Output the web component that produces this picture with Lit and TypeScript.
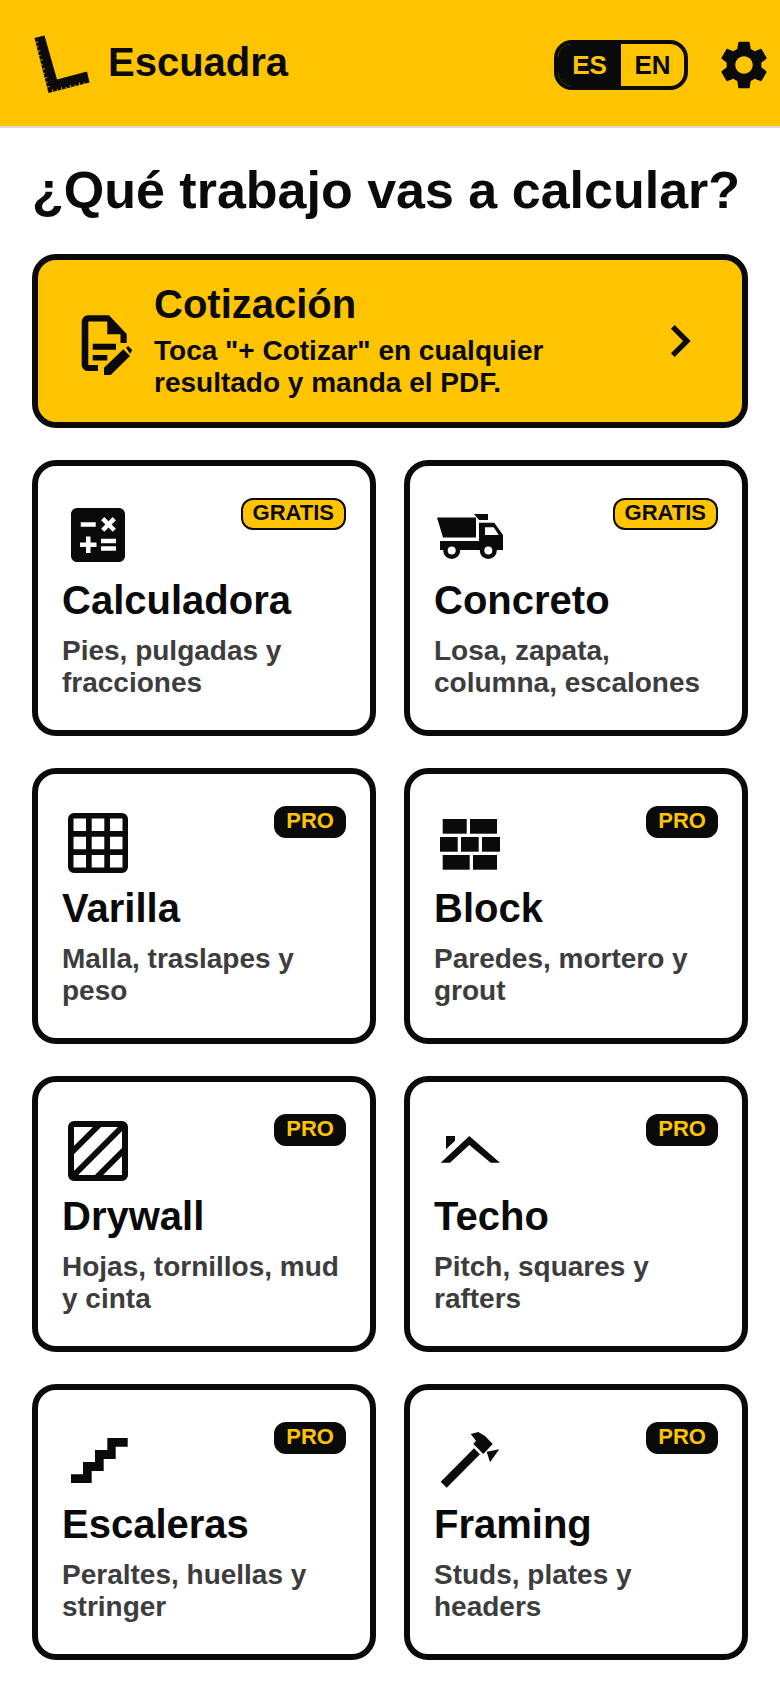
import { LitElement, html, css, svg } from "lit";
import { customElement } from "lit/decorators.js";

const icons: Record<string, unknown> = {
  calc: svg`<svg viewBox="0 0 24 24" width="72" height="72"><path d="M19,3H5C3.9,3,3,3.9,3,5v14c0,1.1,0.9,2,2,2h14c1.1,0,2-0.9,2-2V5C21,3.9,20.1,3,19,3z M13.03,7.06L14.09,6l1.41,1.41L16.91,6l1.06,1.06l-1.41,1.41l1.41,1.41l-1.06,1.06L15.5,9.54l-1.41,1.41l-1.06-1.06l1.41-1.41L13.03,7.06z M6.25,7.72h5v1.5h-5V7.72z M11.5,16h-2v2H8v-2H6v-1.5h2v-2h1.5v2h2V16z M18,17.25h-5v-1.5h5V17.25z M18,14.75h-5v-1.5h5V14.75z"/></svg>`,
  truck: svg`<svg viewBox="0 0 72 72" width="72" height="72"><path d="M3 18.500H42V38.500H9z"/><path d="M40 15H54V21H45z"/><path d="M45 23.700H60.300L69 36V51H6V42H45z"/><path fill="#fff" d="M51 28.300H59.700L64.700 36H51z"/><circle cx="17.700" cy="51.500" r="8.500"/><circle cx="17.700" cy="51.500" r="4" fill="#fff"/><circle cx="54.300" cy="51.500" r="8.500"/><circle cx="54.300" cy="51.500" r="4" fill="#fff"/></svg>`,
  grid: svg`<svg viewBox="0 0 72 72" width="72" height="72"><path fill-rule="evenodd" d="M12 6H60A6 6 0 0 1 66 12V60A6 6 0 0 1 60 66H12A6 6 0 0 1 6 60V12A6 6 0 0 1 12 6zM11.500 11.500V24H24V11.500zM29.700 11.500V24H42.300V11.500zM48 11.500V24H60.500V11.500zM11.500 29.700V42.300H24V29.700zM29.700 29.700V42.300H42.300V29.700zM48 29.700V42.300H60.500V29.700zM11.500 48V60.500H24V48zM29.700 48V60.500H42.300V48zM48 48V60.500H60.500V48z"/></svg>`,
  block: svg`<svg viewBox="0 0 72 72" width="72" height="72"><rect x="8.700" y="12" width="24" height="14.700"/><rect x="36" y="12" width="27" height="14.700"/><rect x="6" y="30" width="17.700" height="14.700"/><rect x="27" y="30" width="17.700" height="14.700"/><rect x="48" y="30" width="18" height="14.700"/><rect x="8.700" y="48" width="27" height="14.700"/><rect x="39" y="48" width="24" height="14.700"/></svg>`,
  drywall: svg`<svg viewBox="0 0 72 72" width="72" height="72"><rect x="9" y="9" width="54" height="54" rx="3" fill="none" stroke="#0a0a0a" stroke-width="6"/><path d="M8 39L39 8M10 62L62 10M33 64L64 33" fill="none" stroke="#0a0a0a" stroke-width="6"/></svg>`,
  roof: svg`<svg viewBox="0 0 72 72" width="72" height="72"><path d="M35.300 21L66 47.700H56.700L35.300 30L16 47.700H6.700z"/><path d="M12 21H21V25.700L12 34.300z"/></svg>`,
  stairs: svg`<svg viewBox="0 0 72 72" width="72" height="72"><path d="M45.300 15H65.700V23.700H53.700V36H41.700V48H29.700V60H9V51.300H21V39H33V27H45.300z"/></svg>`,
  hammer: svg`<svg viewBox="0 0 72 72" width="72" height="72"><path d="M6.700 58.700L12.700 64.700L46 31.300L40 25.300z"/><path d="M36.700 11L44.300 9L51 13L58.700 21L49.300 31L39.300 21L42 17.700z"/><path d="M52.700 28.700L65.300 26.300L56 39.300z"/></svg>`,
};

const cards = [
  { icon: "calc", title: "Calculadora", sub: "Pies, pulgadas y fracciones", free: true },
  { icon: "truck", title: "Concreto", sub: "Losa, zapata, columna, escalones", free: true },
  { icon: "grid", title: "Varilla", sub: "Malla, traslapes y peso", free: false },
  { icon: "block", title: "Block", sub: "Paredes, mortero y grout", free: false },
  { icon: "drywall", title: "Drywall", sub: "Hojas, tornillos, mud y cinta", free: false },
  { icon: "roof", title: "Techo", sub: "Pitch, squares y rafters", free: false },
  { icon: "stairs", title: "Escaleras", sub: "Peraltes, huellas y stringer", free: false },
  { icon: "hammer", title: "Framing", sub: "Studs, plates y headers", free: false },
];

function ticks(): string {
  let d = "";
  for (let i = 1; i < 12; i++) {
    const x = 6.5 + 0.25 * 4.6 * i;
    const y = 5 + 0.97 * 4.6 * i;
    d += `M${x.toFixed(2)} ${y.toFixed(2)}l${(i % 2 ? 2.4 : 1.5).toFixed(1)} -0.6`;
  }
  for (let i = 1; i < 9; i++) {
    const x = 20.5 + 0.97 * 4.6 * i;
    const y = 60 - 0.25 * 4.6 * i;
    const l = i % 2 ? 2.4 : 1.5;
    d += `M${x.toFixed(2)} ${y.toFixed(2)}l${(-0.24 * l).toFixed(2)} ${(-0.97 * l).toFixed(2)}`;
  }
  return d;
}

@customElement("app-root")
export class AppRoot extends LitElement {
  static styles = css`
    :host {
      display: block;
      min-height: 1688px;
      background: #fff;
      color: #0a0a0a;
      font-family: "Liberation Sans", Arial, sans-serif;
    }
    svg { display: block; fill: #0a0a0a; flex: none; }
    .header {
      display: flex;
      align-items: center;
      height: 126px;
      background: #ffc400;
      border-bottom: 2px solid #d9d9d9;
      padding: 0 7px 0 28px;
    }
    .logo { margin-top: 3px; }
    .logo-ticks { fill: none; stroke: #ffc400; stroke-width: 0.9; }
    .brand {
      flex: 1;
      margin-left: 16px;
      padding-bottom: 2px;
      font-size: 40px;
      font-weight: 700;
    }
    .lang {
      display: flex;
      width: 134px;
      height: 50px;
      box-sizing: border-box;
      border: 4px solid #0a0a0a;
      border-radius: 18px;
      overflow: hidden;
      margin: 4px 27px 0 0;
    }
    .lang span {
      flex: 1;
      display: flex;
      align-items: center;
      justify-content: center;
      font-size: 26px;
      font-weight: 700;
    }
    .lang .on { background: #0a0a0a; color: #ffc400; }
    .gear { margin-top: 4px; }
    .main { padding: 0 32px; }
    h1 {
      margin: 0;
      padding-top: 30px;
      font-size: 52px;
      line-height: 64px;
      font-weight: 700;
    }
    .hero {
      display: flex;
      align-items: center;
      box-sizing: border-box;
      height: 174px;
      margin-top: 32px;
      padding: 0 30px 0 24px;
      background: #ffc400;
      border: 6px solid #0a0a0a;
      border-radius: 24px;
    }
    .hero-icon { margin-top: 2px; }
    .hero-text { flex: 1; margin-left: 20px; padding-bottom: 2px; }
    .hero-title { font-size: 40px; line-height: 46px; font-weight: 700; }
    .hero-sub { margin-top: 8px; font-size: 28px; line-height: 32px; font-weight: 700; max-width: 440px; }
    .grid {
      display: grid;
      grid-template-columns: 344px 344px;
      column-gap: 28px;
      row-gap: 32px;
      margin-top: 32px;
    }
    .card {
      box-sizing: border-box;
      height: 276px;
      padding: 32px 24px;
      border: 6px solid #0a0a0a;
      border-radius: 24px;
      background: #fff;
    }
    .head { display: flex; justify-content: space-between; align-items: flex-start; }
    .head svg { margin-top: 1px; }
    .badge {
      box-sizing: border-box;
      height: 32px;
      padding: 0 10px;
      border: 2px solid #0a0a0a;
      border-radius: 12px;
      font-size: 22px;
      line-height: 25px;
      font-weight: 700;
    }
    .free { background: #ffc400; color: #0a0a0a; }
    .pro { background: #0a0a0a; color: #ffc400; }
    .title { margin-top: 6px; font-size: 40px; line-height: 46px; font-weight: 700; }
    .sub { margin-top: 12px; font-size: 28px; line-height: 32px; font-weight: 700; color: #3d3d3d; }
  `;

  render() {
    return html`
      <div class="header">
        <svg class="logo" viewBox="0 0 64 64" width="64" height="64">
          <path d="M6.500 5L16.500 2.500L29 46.500L59 38.500L61.500 49.500L20.500 60z" />
          <path class="logo-ticks" d="${ticks()}" />
        </svg>
        <div class="brand">Escuadra</div>
        <div class="lang"><span class="on">ES</span><span>EN</span></div>
        <svg class="gear" viewBox="0 0 24 24" width="58" height="58"><path d="M19.140,12.940c0.040-0.300,0.060-0.610,0.060-0.940c0-0.320-0.020-0.640-0.070-0.940l2.030-1.580c0.180-0.140,0.230-0.410,0.120-0.610l-1.920-3.320c-0.120-0.220-0.370-0.290-0.590-0.220l-2.390,0.960c-0.500-0.380-1.030-0.700-1.620-0.940L14.400,2.810c-0.040-0.240-0.240-0.410-0.480-0.410h-3.840c-0.240,0-0.430,0.170-0.470,0.410L9.250,5.350C8.660,5.590,8.120,5.920,7.630,6.290L5.240,5.330c-0.220-0.080-0.470,0-0.590,0.220L2.740,8.870C2.620,9.080,2.660,9.340,2.860,9.480l2.030,1.580C4.840,11.360,4.800,11.690,4.800,12s0.020,0.640,0.070,0.940l-2.030,1.580c-0.180,0.140-0.230,0.410-0.120,0.610l1.920,3.320c0.120,0.220,0.370,0.290,0.590,0.220l2.390-0.960c0.500,0.380,1.030,0.700,1.620,0.940l0.360,2.540c0.050,0.240,0.240,0.410,0.480,0.410h3.840c0.240,0,0.440-0.170,0.470-0.410l0.360-2.540c0.590-0.240,1.130-0.560,1.620-0.940l2.390,0.960c0.220,0.080,0.470,0,0.590-0.220l1.920-3.320c0.120-0.220,0.070-0.470-0.120-0.610L19.140,12.940z M12,15.600c-1.980,0-3.600-1.620-3.600-3.600s1.620-3.600,3.600-3.600s3.600,1.620,3.600,3.600S13.980,15.600,12,15.600z"/></svg>
      </div>
      <div class="main">
        <h1>¿Qué trabajo vas a calcular?</h1>
        <div class="hero">
          <svg class="hero-icon" viewBox="0 0 72 72" width="72" height="72">
            <path d="M26 9.300H47L64.700 28V37H58.500V28.300H45.300V15.500H26.300V59H36V65H26A6.300 6.300 0 0 1 19.700 58.700V15.600A6.300 6.300 0 0 1 26 9.300z"/>
            <path d="M30.700 37.700H54V43.700H30.700zM30.700 49H45.300V54.500H30.700z"/>
            <path d="M42 61.700L61.300 43.300L68 50L48.700 69H42z"/>
            <path d="M64 41.700L66.300 40L70.300 44.300L68 47.700z"/>
          </svg>
          <div class="hero-text">
            <div class="hero-title">Cotización</div>
            <div class="hero-sub">Toca "+ Cotizar" en cualquier resultado y manda el PDF.</div>
          </div>
          <svg viewBox="0 0 24 24" width="64" height="64"><path d="M10 6L8.590 7.410 13.170 12l-4.580 4.590L10 18l6-6z"/></svg>
        </div>
        <div class="grid">
          ${cards.map(
            (c) => html`
              <div class="card">
                <div class="head">
                  ${icons[c.icon]}
                  <span class="badge ${c.free ? "free" : "pro"}">${c.free ? "GRATIS" : "PRO"}</span>
                </div>
                <div class="title">${c.title}</div>
                <div class="sub">${c.sub}</div>
              </div>
            `
          )}
        </div>
      </div>
    `;
  }
}
